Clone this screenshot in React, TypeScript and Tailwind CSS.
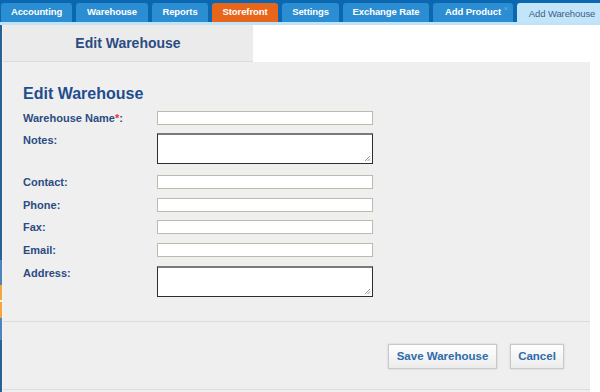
import React from "react";

const tabs = [
  { label: "Accounting", w: 71 },
  { label: "Warehouse", w: 72 },
  { label: "Reports", w: 56 },
  { label: "Storefront", w: 66, active: true },
  { label: "Settings", w: 57 },
  { label: "Exchange Rate", w: 86 },
  { label: "Add Product", w: 80, close: true },
];

const font = { fontFamily: '"Liberation Sans", Arial, sans-serif' };

function Field({ label, req, area, mt }: { label: string; req?: boolean; area?: boolean; mt: string }) {
  return (
    <div className={`flex items-start ${mt}`}>
      <div className="w-[134px] shrink-0 text-[11px] leading-[14px] font-bold text-[#2b4c82]">
        {label}
        {req && <span className="text-[#e8303a]">*</span>}:
      </div>
      {area ? (
        <div className="relative w-[216px] h-[31px] bg-white border border-[#2e2e2e] border-t-[#7a7a7a] border-t-2">
          <svg className="absolute right-[1px] bottom-[1px]" width="7" height="7" viewBox="0 0 7 7">
            <path d="M6 1 L1 6 M6 3.5 L3.5 6 M6 5.5 L5.5 6" stroke="#999" strokeWidth="1" />
          </svg>
        </div>
      ) : (
        <div className="w-[216px] h-[14px] bg-white border border-[#bdbbac]" />
      )}
    </div>
  );
}

export default function App() {
  return (
    <div className="w-[600px] h-[392px] overflow-hidden bg-white flex flex-col" style={font}>
      <div className="h-[22px] bg-[#0b67b0] flex items-end gap-[4px] pl-[1px] shrink-0">
        {tabs.map((t) => (
          <div
            key={t.label}
            style={{ width: t.w }}
            className={`relative h-[19px] rounded-t-[3px] shrink-0 flex items-center justify-center text-[9.5px] font-bold text-white tracking-[-0.1px] ${
              t.active ? "bg-[#e8661c]" : "bg-[#2b8dd2]"
            }`}
          >
            {t.label}
            {t.close && (
              <span className="absolute right-[5px] top-[2px] text-[8px] leading-none font-normal text-[#6fb0df]">×</span>
            )}
          </div>
        ))}
        <div className="w-[90px] h-[22px] -mb-[3px] rounded-t-[3px] shrink-0 bg-[#c3e5f9] flex items-center justify-center pt-[1px] text-[9.5px] text-[#3d5f8c] tracking-[-0.1px]">
          Add Warehouse
        </div>
      </div>
      <div className="h-[3px] bg-[#bfe3f9] shrink-0" />

      <div className="flex flex-1 min-h-0">
        <div className="w-[3px] shrink-0 flex">
          <div className="w-[2px] bg-[#2a5f98] flex flex-col">
            <div className="h-[235px]" />
            <div className="h-[25px] bg-[#4f83bd]" />
            <div className="h-[15px] bg-[#f6a53d]" />
            <div className="h-[2px] bg-white" />
            <div className="h-[16px] bg-[#f6a53d]" />
            <div className="h-[22px] bg-[#4f83bd]" />
          </div>
          <div className="w-[1px] bg-[#f4f4f4]" />
        </div>
        <div className="flex flex-col w-[587px]">
          <div className="w-[250px] h-[37px] bg-[#ebebeb] border-b border-[#dcdcdc] flex items-center justify-center text-[14px] font-bold text-[#2b4c82] shrink-0">
            Edit Warehouse
          </div>
          <div className="flex-1 bg-[#efefef] flex flex-col">
            <div className="pl-[20px] pt-[23px]">
              <div className="text-[16px] leading-[18px] font-bold text-[#1f4d8d]">Edit Warehouse</div>
              <Field label="Warehouse Name" req mt="mt-[8px]" />
              <Field label="Notes" area mt="mt-[8px]" />
              <Field label="Contact" mt="mt-[11px]" />
              <Field label="Phone" mt="mt-[9px]" />
              <Field label="Fax" mt="mt-[8px]" />
              <Field label="Email" mt="mt-[9px]" />
              <Field label="Address" area mt="mt-[9px]" />
            </div>
            <div className="mt-[24px] border-t border-[#dcdcdc] flex justify-end gap-[13px] pr-[26px] pt-[22px] pb-[20px] border-b">
              <button className="h-[25px] w-[109px] bg-gradient-to-b from-white to-[#ececec] border border-[#c9c9c9] shadow-[0_0_2px_rgba(0,0,0,0.15)] text-[11.5px] font-bold text-[#2e6cab]">
                Save Warehouse
              </button>
              <button className="h-[25px] w-[54px] bg-gradient-to-b from-white to-[#ececec] border border-[#c9c9c9] shadow-[0_0_2px_rgba(0,0,0,0.15)] text-[11.5px] font-bold text-[#2e6cab]">
                Cancel
              </button>
            </div>
            <div className="flex-1" />
          </div>
        </div>
      </div>
    </div>
  );
}
